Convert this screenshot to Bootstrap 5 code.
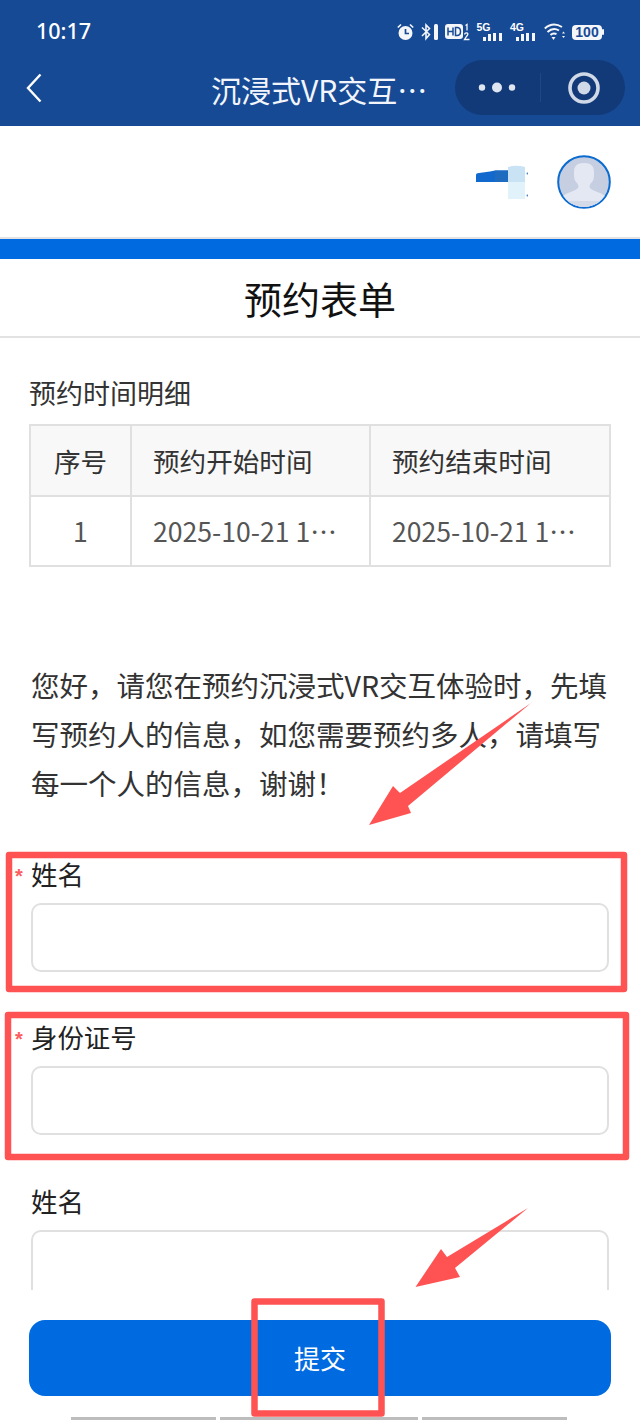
<!DOCTYPE html>
<html lang="zh-CN">
<head>
<meta charset="utf-8">
<title>预约表单</title>
<link rel="stylesheet" href="https://cdn.jsdelivr.net/npm/bootstrap@5.3.0/dist/css/bootstrap.min.css">
<style>
html,body{margin:0;background:#fff}
body{font-family:"Noto Sans CJK SC","Noto Sans",sans-serif;color:#333}
.phone{position:relative;width:640px;height:1422px;overflow:hidden;background:#fff}
.topbar{height:126px;background:#174a94;color:#fff;flex:none}
.statusline{height:60px;padding:0 36px}
.clock{font:500 21.5px/1 "Noto Sans",sans-serif;margin-top:2px}
.stat-icons{gap:6.5px;margin-top:4px}
.sig{position:relative;width:27px;height:18px;display:block}
.sig b{position:absolute;left:0;top:-1px;font:700 10.5px/1 "Liberation Sans",sans-serif;color:#fff}
.sig svg{display:block}
.batt{font:700 14px/15px "Liberation Sans",sans-serif;background:#f4f6fa;color:#174a94;border-radius:4px;width:30px;height:15px;text-align:center;display:block}
.navline{height:66px;position:relative;padding-left:26px}
.navtitle{position:absolute;left:211px;top:7px;font-size:30px;line-height:44px;white-space:nowrap;color:#f2f6fc}
.capsule{position:absolute;left:455px;top:0;width:170px;height:55px;border-radius:28px;background:#123a78}
.capdiv{position:absolute;left:85px;top:13px;width:1px;height:29px;background:#1c4788}
.brandrow{flex:none;padding-right:29px;gap:29px;background:#fff;border-bottom:2px solid #e2e2e2;height:113px}
.brandmark{width:56px;height:36px;display:block}
.avatar{width:54px;height:54px;display:block}
.bluebar{height:20px;background:#006be0;flex:none}
.formtitle{height:79px;line-height:78px;font-size:38px;text-align:center;color:#111;border-bottom:2px solid #e2e2e2;flex:none;font-weight:400;margin:0}
.scrollzone{height:952px;overflow:hidden;flex:none}
.detail-title{font-size:27px;line-height:40px;margin:35px 0 11px 29px;color:#333}
.timetable{width:582px;margin:0 0 0 29px;table-layout:fixed;border-color:#e0e0e0;--bs-border-width:2px}
.timetable th,.timetable td{padding:0 21px;font-size:26.6px;line-height:36px;font-weight:400;vertical-align:middle;border:2px solid #e0e0e0}
.timetable th{height:71px;background:#f8f8f8;color:#333}
.timetable td{height:70px;color:#555}
.timetable .cn{width:101px;text-align:center;padding:0}
.timetable .mid{width:239px}
.intro{font-size:28.5px;line-height:49px;margin:93px 28px 0 31px;color:#333}
.fieldgroup{padding:0 31px;margin-bottom:0}
.fieldlabel{position:relative;font-size:26.4px;line-height:36px;color:#222;margin:0 0 11px;display:block}
.req{position:absolute;left:-16px;top:2px;color:#ff5d5d;font:700 20px/36px "Liberation Sans",sans-serif}
.fieldinput.form-control{height:69px;border:2px solid #e0e0e0;border-radius:10px;background:#fff;box-shadow:none}
.g1{margin-top:49px}.g2{margin-top:47px}.g3{margin-top:48px}
.actionzone{height:130px;flex:none;padding:30px 29px 0;background:#fff;position:relative}
.submitbtn.btn{height:76px;width:582px;border-radius:16px;background:#006be0;border:0;font-size:26px;color:#fff;display:block;padding-bottom:8px}
.tabstub{position:absolute;left:71px;bottom:0;gap:4px}
.tabstub span{display:block;height:3px;background:#bdbdbd}
.marks{position:absolute;left:0;top:0;width:640px;height:1422px;pointer-events:none}
</style>
</head>
<body>
<div class="phone d-flex flex-column">
  <header class="topbar">
    <div class="statusline d-flex align-items-center justify-content-between">
      <span class="clock">10:17</span>
      <span class="stat-icons d-flex align-items-center">
        <svg width="17" height="18" viewBox="0 0 17 18"><circle cx="8.500" cy="10" r="7" fill="#f4f6fa"/><path d="M8.500 6V10.500H12" fill="none" stroke="#174a94" stroke-width="1.700"/><path d="M0.800 4.500L4 1.500M16.200 4.500L13 1.500" stroke="#f4f6fa" stroke-width="1.700"/></svg>
        <svg width="18" height="18" viewBox="0 0 18 18"><path d="M1 4.500L8.500 11.500L5 15.500V2L8.500 5.500L1 13" fill="none" stroke="#f4f6fa" stroke-width="1.600"/><rect x="13" y="1" width="4" height="16" rx="1.500" fill="#f4f6fa"/></svg>
        <svg width="25" height="18" viewBox="0 0 25 18"><rect x="0" y="1" width="18" height="15" rx="3" fill="#f4f6fa"/><path d="M3 4.500V12.500M8 4.500V12.500M3 8.500H8M10.500 4.500V12.500H12Q15.500 12.500 15.500 8.500T12 4.500Z" fill="none" stroke="#174a94" stroke-width="1.500"/><path d="M20.500 2.500L22 1.500V7.500" fill="none" stroke="#f4f6fa" stroke-width="1.300"/><path d="M19.500 11.500Q20 9.500 22 10T21.500 13.500L19.500 16.500H24.500" fill="none" stroke="#f4f6fa" stroke-width="1.300"/></svg>
        <span class="sig"><b>5G</b><svg width="27" height="18" viewBox="0 0 27 18"><rect x="6" y="14" width="3" height="4" fill="#f4f6fa"/><rect x="11" y="11" width="3" height="7" fill="#f4f6fa"/><rect x="16" y="10" width="3" height="8" fill="#f4f6fa"/><rect x="22" y="10" width="3" height="8" fill="#f4f6fa"/></svg></span>
        <span class="sig"><b>4G</b><svg width="27" height="18" viewBox="0 0 27 18"><rect x="6" y="14" width="3" height="4" fill="#f4f6fa"/><rect x="11" y="11" width="3" height="7" fill="#f4f6fa"/><rect x="16" y="10" width="3" height="8" fill="#f4f6fa"/><rect x="22" y="10" width="3" height="8" fill="#f4f6fa"/></svg></span>
        <svg width="22" height="18" viewBox="0 0 22 18"><path d="M0.800 5.500Q9 -1.500 18 4M3.500 9Q9 4 15 7.500M6.500 12Q9 9.500 12.500 11" fill="none" stroke="#f4f6fa" stroke-width="2"/><path d="M7.500 14L9.500 17L11.500 14Z" fill="#f4f6fa"/><path d="M19.500 8.500L18 10.500H21ZM19.500 15L18 13H21Z" fill="#f4f6fa"/></svg>
        <span class="d-flex align-items-center gap-0"><span class="batt">100</span><svg width="2" height="6" viewBox="0 0 2 6" class="d-block"><rect width="2" height="6" rx="1" fill="#f4f6fa"/></svg></span>
      </span>
    </div>
    <div class="navline">
      <svg class="d-block" width="18" height="44" viewBox="0 0 18 44"><path d="M14.500 14.500L2 28L14.500 41.500" fill="none" stroke="#fff" stroke-width="2.400"/></svg>
      <span class="navtitle">沉浸式VR交互…</span>
      <div class="capsule">
        <svg class="position-absolute top-0 start-0" width="170" height="55" viewBox="0 0 170 55"><circle cx="27" cy="27.500" r="3.200" fill="#dfe6f1"/><circle cx="42" cy="27.500" r="5" fill="#dfe6f1"/><circle cx="57" cy="27.500" r="3.200" fill="#dfe6f1"/><circle cx="129" cy="28" r="14" fill="none" stroke="#cfd9e8" stroke-width="3.600"/><circle cx="129" cy="28" r="6.500" fill="#cfd9e8"/></svg>
        <div class="capdiv"></div>
      </div>
    </div>
  </header>
  <div class="brandrow d-flex align-items-center justify-content-end">
    <svg class="brandmark" viewBox="0 0 56 36"><path d="M4 18V11Q4 9 7 9L18 7.500L23 6.500H36V18Z" fill="#1169cd"/><path d="M23 6.500H36V18H23Z" fill="#1e6bc0"/><path d="M36 3Q44 0.500 53 3V18H36Z" fill="#c9e3f5"/><rect x="36" y="18" width="17" height="17" fill="#e2f2fb"/><circle cx="55.500" cy="9.500" r="1" fill="#4d86c9"/><circle cx="55.500" cy="31.500" r="1" fill="#4d86c9"/></svg>
    <svg class="avatar" viewBox="0 0 54 54"><defs><clipPath id="avclip"><circle cx="27" cy="27" r="25"/></clipPath></defs><circle cx="27" cy="27" r="25.800" fill="#c6cfe1" stroke="#0b6bd0" stroke-width="2"/><g clip-path="url(#avclip)"><path d="M27 8C20 8 17 11 17 17C17 22 17 25 19 27C21 29 22 31 21 33C19 36 9 37 4 43V54H50V43C45 37 35 36 33 33C32 31 33 29 35 27C37 25 37 22 37 17C37 11 34 8 27 8Z" fill="#e4e8f2"/><rect x="0" y="46" width="54" height="8" fill="#d4dae8"/></g></svg>
  </div>
  <div class="bluebar"></div>
  <h1 class="formtitle">预约表单</h1>
  <main class="scrollzone">
    <div class="detail-title">预约时间明细</div>
    <table class="table table-bordered timetable">
      <thead><tr><th class="cn">序号</th><th class="mid text-truncate">预约开始时间</th><th class="text-truncate">预约结束时间</th></tr></thead>
      <tbody><tr><td class="cn">1</td><td class="text-truncate">2025-10-21 10:00</td><td class="text-truncate">2025-10-21 12:00</td></tr></tbody>
    </table>
    <p class="intro">您好，请您在预约沉浸式VR交互体验时，先填写预约人的信息，如您需要预约多人，请填写每一个人的信息，谢谢！</p>
    <div class="fieldgroup g1">
      <label class="fieldlabel"><span class="req">*</span>姓名</label>
      <input class="form-control fieldinput" type="text">
    </div>
    <div class="fieldgroup g2">
      <label class="fieldlabel"><span class="req">*</span>身份证号</label>
      <input class="form-control fieldinput" type="text">
    </div>
    <div class="fieldgroup g3">
      <label class="fieldlabel">姓名</label>
      <input class="form-control fieldinput" type="text">
    </div>
  </main>
  <footer class="actionzone">
    <button class="btn btn-primary submitbtn" type="button">提交</button>
    <div class="tabstub d-flex"><span style="width:145px"></span><span style="width:198px"></span><span style="width:145px"></span></div>
  </footer>
  <svg class="marks" viewBox="0 0 640 1422">
    <g fill="none" stroke="#ff5353" stroke-width="6.500" stroke-linejoin="round">
      <rect x="9" y="855" width="615" height="134"/>
      <rect x="8" y="1015" width="618" height="142"/>
      <rect x="254.500" y="1301.500" width="127" height="112"/>
    </g>
    <g fill="#ff5353">
      <path d="M531 703L400 793L393 786L369 825L411 813L408 806Z"/>
      <path d="M528 1208L447 1257L441 1249L415.500 1287L460 1277L455 1268Z"/>
    </g>
  </svg>
</div>
<script src="https://cdn.jsdelivr.net/npm/bootstrap@5.3.0/dist/js/bootstrap.bundle.min.js"></script>
</body>
</html>
